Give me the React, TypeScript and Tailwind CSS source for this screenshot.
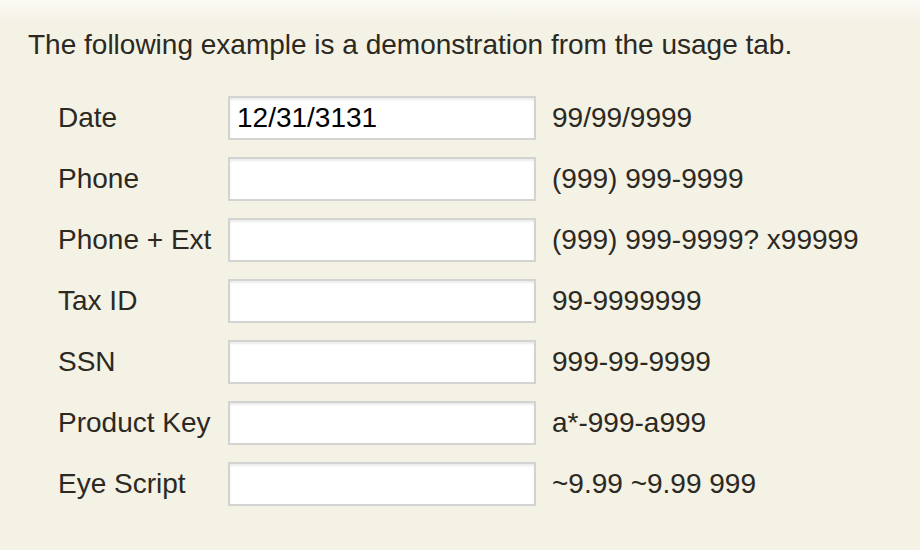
const rows = [
  { label: "Date", mask: "99/99/9999", value: "12/31/3131" },
  { label: "Phone", mask: "(999) 999-9999", value: "" },
  { label: "Phone + Ext", mask: "(999) 999-9999? x99999", value: "" },
  { label: "Tax ID", mask: "99-9999999", value: "" },
  { label: "SSN", mask: "999-99-9999", value: "" },
  { label: "Product Key", mask: "a*-999-a999", value: "" },
  { label: "Eye Script", mask: "~9.99 ~9.99 999", value: "" },
];

export default function App() {
  return (
    <div className="h-[550px] w-[920px] overflow-hidden bg-[linear-gradient(to_bottom,#fbfaf5_0px,#f4f1e5_24px)] font-['Liberation_Sans',Arial,sans-serif] text-[#2b2922]">
      <p className="pl-[28px] pt-[30px] text-[28px] leading-[30px]">
        The following example is a demonstration from the usage tab.
      </p>
      <div className="mt-[36px] flex flex-col gap-[17px] pl-[58px]">
        {rows.map((r) => (
          <div key={r.label} className="flex items-center">
            <span className="w-[170px] text-[28px] leading-[30px]">{r.label}</span>
            <input
              defaultValue={r.value}
              className="h-[44px] w-[308px] border-2 border-[#d3d3d1] bg-white px-[7px] text-[28px] text-black shadow-[inset_0_2px_2px_rgba(0,0,0,0.08)] outline-none"
            />
            <span className="ml-[16px] text-[28px] leading-[30px]">{r.mask}</span>
          </div>
        ))}
      </div>
    </div>
  );
}
